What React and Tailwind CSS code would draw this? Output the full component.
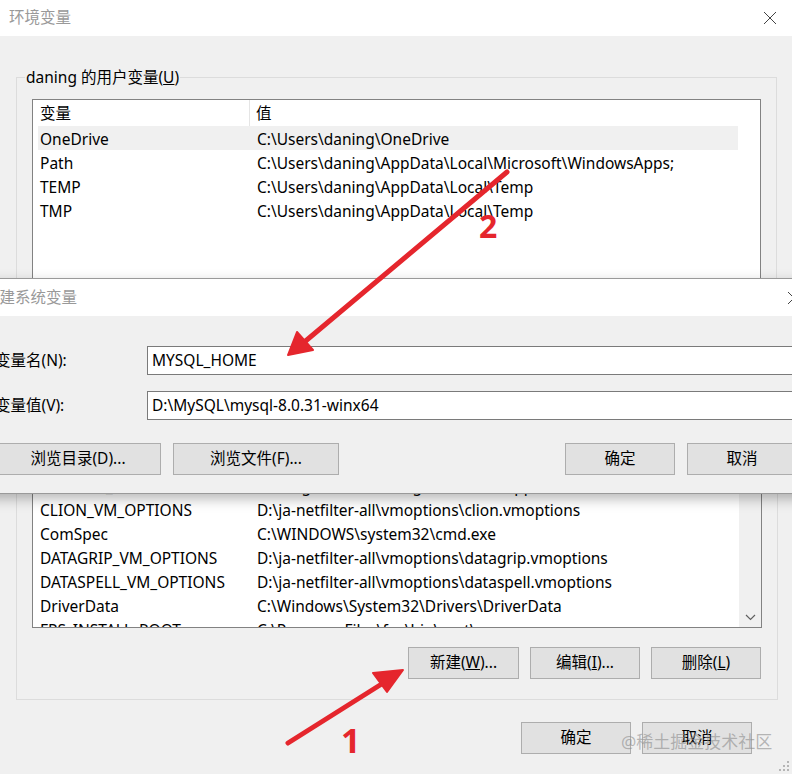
import React from 'react';

const userVars = [
  { name: 'OneDrive', value: 'C:\\Users\\daning\\OneDrive', selected: true },
  { name: 'Path', value: 'C:\\Users\\daning\\AppData\\Local\\Microsoft\\WindowsApps;' },
  { name: 'TEMP', value: 'C:\\Users\\daning\\AppData\\Local\\Temp' },
  { name: 'TMP', value: 'C:\\Users\\daning\\AppData\\Local\\Temp' },
];

const systemVars = [
  { name: 'ALLUSERSPROFILE', value: 'C:\\ProgramData' },
  { name: 'APPCODE_VM_OPTIONS', value: 'D:\\ja-netfilter-all\\vmoptions\\appcode.vmoptions' },
  { name: 'CLASSPATH', value: '.;%JAVA_HOME%\\lib;%JAVA_HOME%\\lib\\tools.jar' },
  { name: 'CHROME_PATH', value: 'C:\\Program Files\\Google\\Chrome\\Application' },
  { name: 'CLION_VM_OPTIONS', value: 'D:\\ja-netfilter-all\\vmoptions\\clion.vmoptions' },
  { name: 'ComSpec', value: 'C:\\WINDOWS\\system32\\cmd.exe' },
  { name: 'DATAGRIP_VM_OPTIONS', value: 'D:\\ja-netfilter-all\\vmoptions\\datagrip.vmoptions' },
  { name: 'DATASPELL_VM_OPTIONS', value: 'D:\\ja-netfilter-all\\vmoptions\\dataspell.vmoptions' },
  { name: 'DriverData', value: 'C:\\Windows\\System32\\Drivers\\DriverData' },
  { name: 'FPS_INSTALL_ROOT', value: 'C:\\Program Files\\fps\\bin\\root\\' },
];

const CloseIcon = ({ className }) => (
  <svg className={className} width="14" height="14" viewBox="0 0 14 14" fill="none">
    <path d="M1 1L13 13M13 1L1 13" stroke="#444" strokeWidth="1" />
  </svg>
);

const WinButton = ({ children, className = '' }) => (
  <button
    type="button"
    className={`h-[32px] flex items-center justify-center bg-[#e1e1e1] border border-[#adadad] text-[15.5px] text-black ${className}`}
  >
    {children}
  </button>
);

const ListHeader = () => (
  <div className="flex h-[26px] items-center w-[705px] shrink-0">
    <div className="w-[217px] h-full flex items-center pl-[7px] pt-[1px] border-r border-[#e5e5e5]">变量</div>
    <div className="pl-[6px] pt-[1px]">值</div>
  </div>
);

const ListRow = ({ row }) => (
  <div className={`flex h-[24px] items-center pt-[3px] ml-[5px] w-[700px] shrink-0 whitespace-nowrap ${row.selected ? 'bg-[#f0f0f0]' : ''}`}>
    <div className="w-[212px] pl-[2px]">{row.name}</div>
    <div className="pl-[7px]">{row.value}</div>
  </div>
);

const Legend = ({ children }) => (
  <legend className="ml-[8px] px-[1px] leading-[22px]">{children}</legend>
);

export default function App() {
  return (
    <div className="relative w-[792px] h-[774px] overflow-hidden bg-[#f0f0f0] text-[15.5px] text-black font-['Noto_Sans','Noto_Sans_CJK_SC',sans-serif]">
      {/* 环境变量 window */}
      <div className="h-[36px] bg-white flex items-center justify-between pl-[9px] pr-[15px]">
        <span className="text-[#999]">环境变量</span>
        <CloseIcon />
      </div>

      <fieldset className="ml-[16px] mt-[30px] w-[761px] border border-[#dcdcdc] p-0">
        <Legend>daning 的用户变量(<span className="underline">U</span>)</Legend>
        <div className="px-[15px] pt-[11px] pb-[16px]">
          <div className="h-[220px] border border-[#828282] bg-white flex flex-col overflow-hidden">
            <ListHeader />
            {userVars.map((r) => (
              <ListRow key={r.name} row={r} />
            ))}
          </div>
        </div>
      </fieldset>

      <fieldset className="ml-[16px] mt-[5px] w-[761px] border border-[#dcdcdc] p-0">
        <Legend>系统变量(<span className="underline">S</span>)</Legend>
        <div className="px-[15px] pt-[11px] pb-[20px]">
          <div className="h-[254px] border border-[#828282] bg-white flex overflow-hidden">
            <div className="w-[706px] flex flex-col overflow-hidden">
              <ListHeader />
              {systemVars.map((r) => (
                <ListRow key={r.name} row={r} />
              ))}
            </div>
            <div className="w-[22px] bg-[#f0f0f0] flex flex-col justify-end items-center pb-[6px]">
              <svg width="11" height="7" viewBox="0 0 11 7" fill="none">
                <path d="M1 1L5.5 5.5L10 1" stroke="#606060" strokeWidth="1.2" />
              </svg>
            </div>
          </div>
          <div className="mt-[19px] flex justify-end gap-[11px] pr-[1px]">
            <WinButton className="w-[111px]">新建(<span className="underline">W</span>)...</WinButton>
            <WinButton className="w-[110px]">编辑(<span className="underline">I</span>)...</WinButton>
            <WinButton className="w-[110px]">删除(<span className="underline">L</span>)</WinButton>
          </div>
        </div>
      </fieldset>

      <div className="mt-[22px] flex justify-end gap-[11px] pr-[40px]">
        <WinButton className="w-[110px]">确定</WinButton>
        <WinButton className="w-[110px]">取消</WinButton>
      </div>

      {/* resize grip */}
      <svg className="absolute right-[2px] bottom-[2px]" width="12" height="12" viewBox="0 0 12 12">
        <g fill="#b5b5b5">
          <rect x="9" y="1" width="2" height="2" />
          <rect x="5" y="5" width="2" height="2" />
          <rect x="9" y="5" width="2" height="2" />
          <rect x="1" y="9" width="2" height="2" />
          <rect x="5" y="9" width="2" height="2" />
          <rect x="9" y="9" width="2" height="2" />
        </g>
      </svg>

      {/* 新建系统变量 dialog */}
      <div className="absolute left-[-24px] top-[278px] w-[850px] border border-[#9a9a9a] bg-[#f0f0f0] shadow-[0_5px_12px_rgba(0,0,0,0.28)] z-10">
        <div className="h-[37px] bg-white flex items-center justify-between pl-[7px] pr-[24px]">
          <span className="text-[#999]">新建系统变量</span>
          <CloseIcon />
        </div>
        <div className="pt-[30px] pb-[18px]">
          <div className="flex items-center">
            <div className="w-[170px] pl-[18px]">变量名(N):</div>
            <div className="flex-1 mr-[20px] h-[29px] border border-[#7a7a7a] bg-white flex items-center pl-[4px]">MYSQL_HOME</div>
          </div>
          <div className="flex items-center mt-[16px]">
            <div className="w-[170px] pl-[18px]">变量值(V):</div>
            <div className="flex-1 mr-[20px] h-[29px] border border-[#7a7a7a] bg-white flex items-center pl-[4px]">D:\MySQL\mysql-8.0.31-winx64</div>
          </div>
          <div className="flex mt-[23px] pl-[18px] pr-[28px] gap-[12px]">
            <WinButton className="w-[166px]">浏览目录(D)...</WinButton>
            <WinButton className="w-[166px]">浏览文件(F)...</WinButton>
            <WinButton className="w-[110px] ml-auto">确定</WinButton>
            <WinButton className="w-[110px]">取消</WinButton>
          </div>
        </div>
      </div>

      {/* annotation arrows */}
      <svg className="absolute inset-0 z-20 pointer-events-none" width="792" height="774" viewBox="0 0 792 774">
        <g fill="#e5262d" stroke="#e5262d" strokeLinecap="round" strokeLinejoin="round">
          <line x1="507" y1="172" x2="302" y2="344" strokeWidth="5" />
          <polygon points="288,355 297,332 313,350" strokeWidth="2" />
          <line x1="288" y1="743" x2="388" y2="680" strokeWidth="5" />
          <polygon points="403,670 373,673 387,692" strokeWidth="2" />
        </g>
      </svg>
      <span className="absolute z-20 left-[479px] top-[210px] text-[32px] leading-none font-bold text-[#e5262d] font-['Noto_Sans',sans-serif]">2</span>
      <span className="absolute z-20 left-[341px] top-[723px] text-[34px] leading-none font-bold text-[#e5262d] font-['Noto_Sans',sans-serif]">1</span>

      {/* watermark */}
      <span className="absolute z-20 left-[621px] top-[731px] text-[17px] leading-[22px] text-[rgba(140,140,140,0.6)]">@稀土掘金技术社区</span>
    </div>
  );
}
